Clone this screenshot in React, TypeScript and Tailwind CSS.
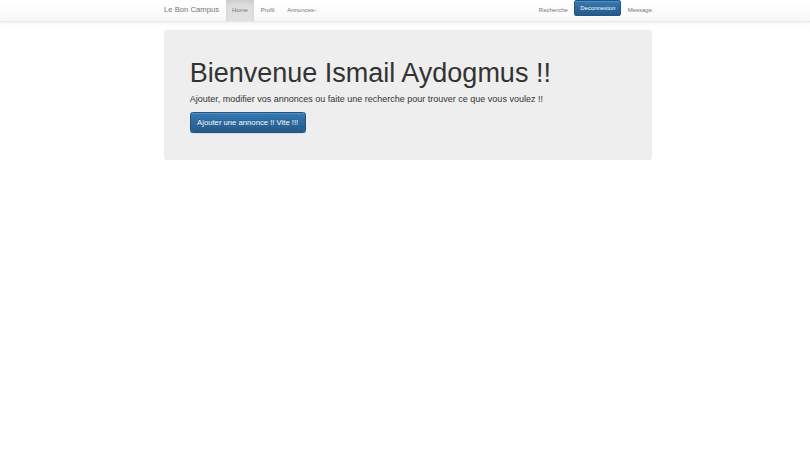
const navLink = "block px-[6.4px] py-[6.4px] text-[6px] leading-[8.6px] text-[#777]";

export default function App() {
  return (
    <div className="min-h-[462px] bg-white font-['Liberation_Sans',Arial,sans-serif] text-[#333]">
      <nav className="h-[22px] border-b border-[#e7e7e7] bg-gradient-to-b from-white to-[#f8f8f8] shadow-[0_1px_3px_rgba(0,0,0,0.075)]">
        <div className="ml-[164px] flex w-[488px] items-start justify-between">
          <div className="-ml-[6.4px] flex items-start">
            <a className="block px-[6.4px] py-[6.4px] text-[7.7px] leading-[8.6px] text-[#777]">Le Bon Campus</a>
            <ul className="flex">
              <li>
                <a className={`${navLink} h-[21px] bg-gradient-to-b from-[#dbdbdb] to-[#e2e2e2] text-[#555] shadow-[inset_0_2px_4px_rgba(0,0,0,0.075)]`}>
                  Home
                </a>
              </li>
              <li>
                <a className={navLink}>Profil</a>
              </li>
              <li>
                <a className={`${navLink} flex items-center`}>
                  Annonces
                  <span className="ml-[0.5px] inline-block border-x-[1.8px] border-t-[1.8px] border-x-transparent border-t-[#777]" />
                </a>
              </li>
            </ul>
          </div>
          <ul className="-mr-[6.4px] flex items-start">
            <li>
              <a className={navLink}>Recherche</a>
            </li>
            <li>
              <button className="block rounded-[2px] border border-[#245580] bg-gradient-to-b from-[#337ab7] to-[#265a88] px-[5px] py-[2.5px] text-[6px] leading-[8.6px] text-white shadow-[inset_0_1px_0_rgba(255,255,255,0.15)]">
                Deconnexion
              </button>
            </li>
            <li>
              <a className={navLink}>Message</a>
            </li>
          </ul>
        </div>
      </nav>

      <div className="ml-[164px] mt-[8px] w-[488px]">
        <div className="rounded-[3px] bg-[#eee] px-[25.7px] pb-[20.5px] pt-[20.5px]">
          <h1 className="mb-[4.3px] mt-[8.6px] text-[27px] font-normal leading-[29.7px] text-[#333]">
            Bienvenue Ismail Aydogmus !!
          </h1>
          <p className="mb-[6.4px] text-[9px] leading-[12.9px]">
            Ajouter, modifier vos annonces ou faite une recherche pour trouver ce que vous voulez !!
          </p>
          <div className="mb-[6.4px] flex">
            <button className="rounded-[2.6px] border border-[#245580] bg-gradient-to-b from-[#337ab7] to-[#265a88] px-[6.4px] py-[4.3px] text-[7.7px] leading-[10.3px] text-white shadow-[inset_0_1px_0_rgba(255,255,255,0.15),0_1px_1px_rgba(0,0,0,0.075)] [text-shadow:0_-1px_0_rgba(0,0,0,0.2)]">
              Ajouter une annonce !! Vite !!!
            </button>
          </div>
        </div>
      </div>
    </div>
  );
}
